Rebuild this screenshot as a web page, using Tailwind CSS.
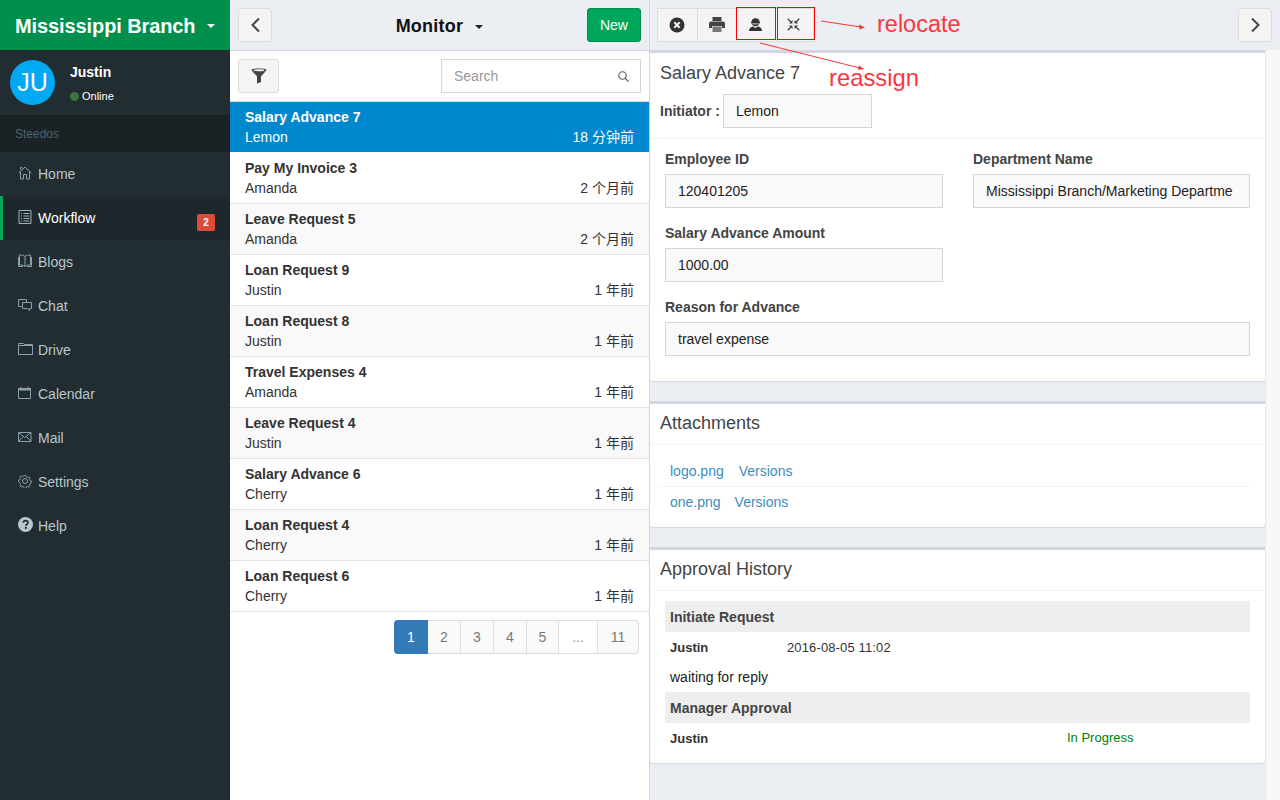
<!DOCTYPE html>
<html>
<head>
<meta charset="utf-8">
<script src="https://cdn.jsdelivr.net/npm/@tailwindcss/browser@4"></script>
</head>
<body class="m-0 overflow-hidden">
<div class="relative flex w-[1280px] h-[800px] overflow-hidden bg-white text-[14px] text-[#333] font-['Liberation_Sans','Noto_Sans_CJK_SC',sans-serif]">

  <!-- Sidebar -->
  <aside class="w-[230px] h-full shrink-0 bg-[#222d32] flex flex-col">
    <div class="h-[50px] bg-[#008f4c] text-white flex items-center pl-[15px] pt-[2px]">
      <span class="text-[20px] font-bold leading-none tracking-[-0.1px] w-[192px]">Mississippi Branch</span>
      <span class="w-0 h-0 border-x-[4px] border-x-transparent border-t-[4px] border-t-white"></span>
    </div>
    <div class="h-[65px] flex">
      <div class="ml-[10px] mt-[10px] w-[45px] h-[45px] rounded-full bg-[#00a9f4] text-white flex items-center justify-center text-[25px] leading-none">JU</div>
      <div class="ml-[15px] flex flex-col">
        <span class="mt-[14px] text-[14px] leading-[17px] font-bold text-white">Justin</span>
        <span class="mt-[8px] flex items-center text-[11px] leading-[14px] text-white"><span class="w-[9px] h-[9px] rounded-full bg-[#3c763d] mr-[3px]"></span>Online</span>
      </div>
    </div>
    <div class="h-[37px] bg-[#1a2226] pl-[15px] flex items-center text-[12px] text-[#4b646f]">Steedos</div>
    <nav class="flex flex-col text-[#b8c7ce]">
      <a class="h-[44px] flex items-center pl-[18px]"><svg class="w-[14px] h-[14px] mr-[6px] -mt-[3px]" viewBox="0 0 14 14" fill="none" stroke="#8aa0aa" stroke-width="1"><path d="M.7 7 7 1l6.300 6M2.500 5.700V13H5.500V8.500h3V13h3V5.700M2.500 3.500v-2h1.500V2.500"/></svg>Home</a>
      <a class="h-[44px] flex items-center pl-[15px] border-l-[3px] border-[#00a65a] bg-[#1e282c] text-white relative"><svg class="w-[14px] h-[14px] mr-[6px] -mt-[3px]" viewBox="0 0 14 14" fill="none" stroke="#9fb0b8" stroke-width="1"><path d="M1 .5h12v13H1zM3 3.500h1M5.500 3.500h6M3 6h1M5.500 6h6M3 8.500h1M5.500 8.500h6M3 11h1M5.500 11h6"/></svg>Workflow<span class="absolute left-[194px] top-[18px] w-[18px] h-[17px] rounded-[2px] bg-[#dd4b39] text-white text-[10px] font-bold flex items-center justify-center">2</span></a>
      <a class="h-[44px] flex items-center pl-[18px]"><svg class="w-[14px] h-[14px] mr-[6px] -mt-[3px]" viewBox="0 0 14 14" fill="none" stroke="#8aa0aa" stroke-width="1"><path d="M7 2.500C5.500 1 3.500 1 1.500 1v10c2 0 4 0 5.500 1.500C8.500 11 10.500 11 12.500 11V1C10.500 1 8.500 1 7 2.500zM7 2.500v10M.5 3v9.500H5M13.500 3v9.500H9"/></svg>Blogs</a>
      <a class="h-[44px] flex items-center pl-[18px]"><svg class="w-[14px] h-[14px] mr-[6px] -mt-[3px]" viewBox="0 0 14 14" fill="none" stroke="#8aa0aa" stroke-width="1"><path d="M3.500 8.500H.5v-7h8v3M4.500 4.500h9v6h-2v2l-2-2h-5z"/></svg>Chat</a>
      <a class="h-[44px] flex items-center pl-[18px]"><svg class="w-[15px] h-[14px] mr-[5px] -mt-[3px]" viewBox="0 0 15 14" fill="none" stroke="#8aa0aa" stroke-width="1"><path d="M.5 2.500v10h14v-9h-14M.5 2.500V1.500h5l1 1h8v1"/></svg>Drive</a>
      <a class="h-[44px] flex items-center pl-[18px]"><svg class="w-[14px] h-[14px] mr-[6px] -mt-[3px]" viewBox="0 0 14 14" fill="none" stroke="#8aa0aa" stroke-width="1"><path d="M.5 2.500h12v10H.5z"/><path d="M.5 2.500h12v1.500H.5z" fill="#8aa0aa"/><path d="M3 .8v2M10 .8v2"/></svg>Calendar</a>
      <a class="h-[44px] flex items-center pl-[18px]"><svg class="w-[14px] h-[14px] mr-[6px] -mt-[3px]" viewBox="0 0 14 14" fill="none" stroke="#8aa0aa" stroke-width="1"><path d="M.5 2.500h12.500v9H.5zM.5 2.500l6.250 5 6.250-5M.5 11.500l4.500-5M13 11.500l-4.500-5"/></svg>Mail</a>
      <a class="h-[44px] flex items-center pl-[18px]"><svg class="w-[14px] h-[14px] mr-[6px] -mt-[3px]" viewBox="0 0 14 14" fill="none" stroke="#8aa0aa" stroke-width="1"><circle cx="7" cy="7" r="2.500"/><path d="M6 .8h2l.4 1.700 1.500.6 1.500-.9 1.400 1.400-.9 1.500.6 1.500 1.700.4v2l-1.700.4-.6 1.500.9 1.500-1.400 1.400-1.500-.9-1.500.6-.4 1.700H6l-.4-1.700-1.500-.6-1.500.9-1.400-1.400.9-1.500-.6-1.500L-.2 8V6l1.700-.4.6-1.500-.9-1.500L2.600 1.200l1.500.9 1.500-.6z" transform="translate(.7 .7) scale(.9)"/></svg>Settings</a>
      <a class="h-[44px] flex items-center pl-[18px]"><svg class="w-[15px] h-[15px] mr-[5px] -mt-[3px]" viewBox="0 0 15 15"><circle cx="7.500" cy="7.500" r="7.500" fill="#b8c7ce"/><path d="M5.200 5.600C5.400 4.300 6.300 3.600 7.600 3.600c1.400 0 2.300.8 2.300 2 0 1.700-2 1.700-2 3.300" fill="none" stroke="#222d32" stroke-width="1.700"/><rect x="6.900" y="10" width="2" height="1.800" fill="#222d32"/></svg>Help</a>
    </nav>
  </aside>

  <!-- List column -->
  <section class="w-[420px] h-full shrink-0 border-r border-[#d2d6de] flex flex-col">
    <header class="h-[51px] shrink-0 bg-[#ebeef3] border-b border-[#d2d6de] flex items-center justify-between px-[8px] relative">
      <button class="w-[34px] h-[34px] rounded-[4px] border border-[#ddd] bg-[#f4f4f4] flex items-center justify-center"><svg class="w-[11px] h-[16px]" viewBox="0 0 11 16" fill="none" stroke="#444" stroke-width="2"><path d="M9 1.500 2.500 8 9 14.500"/></svg></button>
      <div class="ml-[20px] mt-[2px] flex items-center text-[18px] tracking-[0.25px] font-bold text-[#111]"><span>Monitor</span><span class="ml-[12px] mt-[2px] w-0 h-0 border-x-[4px] border-x-transparent border-t-[4px] border-t-[#222]"></span></div>
      <button class="w-[54px] h-[34px] rounded-[3px] border border-[#008d4c] bg-[#00a65a] text-white text-[14px]">New</button>
    </header>
    <div class="h-[50px] shrink-0 flex items-center justify-between px-[8px]">
      <button class="w-[41px] h-[34px] rounded-[3px] border border-[#ddd] bg-[#f4f4f4] flex items-center justify-center"><svg class="w-[16px] h-[16px]" viewBox="0 0 16 16" fill="#444"><path d="M.5 1.500C2 .3 14 .3 15.500 1.500 15.500 3 10.500 7.500 10 8.500V14l-4 1.500V8.500C5.500 7.500.5 3 .5 1.500z"/><ellipse cx="8" cy="2.300" rx="5.500" ry="1" fill="#f4f4f4"/></svg></button>
      <div class="w-[200px] h-[34px] border border-[#d2d6de] flex items-center justify-between pl-[12px] pr-[11px] text-[#999]"><span>Search</span><svg class="w-[11px] h-[11px]" viewBox="0 0 11 11" fill="none" stroke="#555" stroke-width="1.100"><circle cx="4.500" cy="4.500" r="3.700"/><path d="m7.300 7.300 3.200 3.200"/></svg></div>
    </div>
    <div class="flex flex-col border-t border-[#ddd]">
      <div class="h-[50px] bg-[#0088cf] text-white px-[15px] pt-[5px] leading-[20px]"><div class="font-bold">Salary Advance 7</div><div class="flex justify-between"><span>Lemon</span><span>18 分钟前</span></div></div>
      <div class="h-[52px] bg-white border-b border-[#e3e3e3] px-[15px] pt-[6px] leading-[20px]"><div class="font-bold">Pay My Invoice 3</div><div class="flex justify-between"><span>Amanda</span><span>2 个月前</span></div></div>
      <div class="h-[51px] bg-[#f9f9f9] border-b border-[#e3e3e3] px-[15px] pt-[5px] leading-[20px]"><div class="font-bold">Leave Request 5</div><div class="flex justify-between"><span>Amanda</span><span>2 个月前</span></div></div>
      <div class="h-[51px] bg-white border-b border-[#e3e3e3] px-[15px] pt-[5px] leading-[20px]"><div class="font-bold">Loan Request 9</div><div class="flex justify-between"><span>Justin</span><span>1 年前</span></div></div>
      <div class="h-[51px] bg-[#f9f9f9] border-b border-[#e3e3e3] px-[15px] pt-[5px] leading-[20px]"><div class="font-bold">Loan Request 8</div><div class="flex justify-between"><span>Justin</span><span>1 年前</span></div></div>
      <div class="h-[51px] bg-white border-b border-[#e3e3e3] px-[15px] pt-[5px] leading-[20px]"><div class="font-bold">Travel Expenses 4</div><div class="flex justify-between"><span>Amanda</span><span>1 年前</span></div></div>
      <div class="h-[51px] bg-[#f9f9f9] border-b border-[#e3e3e3] px-[15px] pt-[5px] leading-[20px]"><div class="font-bold">Leave Request 4</div><div class="flex justify-between"><span>Justin</span><span>1 年前</span></div></div>
      <div class="h-[51px] bg-white border-b border-[#e3e3e3] px-[15px] pt-[5px] leading-[20px]"><div class="font-bold">Salary Advance 6</div><div class="flex justify-between"><span>Cherry</span><span>1 年前</span></div></div>
      <div class="h-[51px] bg-[#f9f9f9] border-b border-[#e3e3e3] px-[15px] pt-[5px] leading-[20px]"><div class="font-bold">Loan Request 4</div><div class="flex justify-between"><span>Cherry</span><span>1 年前</span></div></div>
      <div class="h-[51px] bg-white border-b border-[#e3e3e3] px-[15px] pt-[5px] leading-[20px]"><div class="font-bold">Loan Request 6</div><div class="flex justify-between"><span>Cherry</span><span>1 年前</span></div></div>
    </div>
    <div class="mt-[8px] mr-[10px] self-end flex h-[34px] text-[#777]">
      <span class="w-[34px] rounded-l-[4px] bg-[#337ab7] text-white flex items-center justify-center">1</span>
      <span class="w-[33px] bg-[#fafafa] border-y border-r border-[#ddd] flex items-center justify-center">2</span>
      <span class="w-[33px] bg-[#fafafa] border-y border-r border-[#ddd] flex items-center justify-center">3</span>
      <span class="w-[33px] bg-[#fafafa] border-y border-r border-[#ddd] flex items-center justify-center">4</span>
      <span class="w-[32px] bg-[#fafafa] border-y border-r border-[#ddd] flex items-center justify-center">5</span>
      <span class="w-[39px] bg-white border-y border-r border-[#ddd] flex items-center justify-center text-[#999]">...</span>
      <span class="w-[41px] rounded-r-[4px] bg-[#fafafa] border-y border-r border-[#ddd] flex items-center justify-center">11</span>
    </div>
  </section>

  <!-- Detail column -->
  <main class="flex-1 h-full flex flex-col bg-[#ebeef3] min-w-0">
    <header class="h-[50px] shrink-0 flex items-center justify-between pl-[7px] pr-[8px]">
      <div class="flex h-[34px]">
        <button class="w-[41px] bg-[#f4f4f4] border border-[#ddd] flex items-center justify-center"><svg class="w-[16px] h-[16px] mr-[1px] -mt-[1px]" viewBox="0 0 16 16"><circle cx="8" cy="8" r="7.500" fill="#333"/><path d="m5.300 5.300 5.400 5.400m0-5.400-5.400 5.400" stroke="#f4f4f4" stroke-width="2"/></svg></button>
        <button class="w-[39px] bg-[#f4f4f4] border-y border-r border-[#ddd] flex items-center justify-center"><svg class="w-[16px] h-[15px] -mt-[1px]" viewBox="0 0 16 15"><path d="M3.500 0h9v4h-9z" fill="#444"/><path d="M2 4.500h12a2 2 0 0 1 2 2V11h-3V9H3v2H0V6.500a2 2 0 0 1 2-2z" fill="#444"/><path d="M3.500 9.500h9V15h-9z" fill="#777"/></svg></button>
        <button class="w-[41px] bg-[#f4f4f4] border-y border-r border-[#ddd] flex items-center justify-center"><svg class="w-[13px] h-[13px] mr-[3px] -mt-[1px]" viewBox="0 0 13 13" fill="#333"><circle cx="6.500" cy="4.200" r="4"/><path d="M2 3.800h9v1.300H2z" fill="#333"/><path d="M3.200 5.500h6.600v.8H3.200z" fill="#f4f4f4"/><path d="M0 13c0-2.800 2-4.300 4-4.500l2.500 1.500L9 8.500c2 .2 4 1.700 4 4.500z"/></svg></button>
        <button class="w-[36px] bg-[#f4f4f4] border-y border-r border-[#ddd] flex items-center justify-center"><svg class="w-[13px] h-[13px] mr-[5px] -mt-[1px]" viewBox="0 0 13 13" fill="none" stroke="#444" stroke-width="1.300"><path d="m.7.7 3.800 3.800M12.300.7 8.500 4.500M.7 12.300l3.800-3.800M12.300 12.300 8.500 8.500"/><path d="M2 5.500h3.500V2zM11 5.500H7.500V2zM2 7.500h3.500V11zM11 7.500H7.500V11z" fill="#444" stroke="none"/></svg></button>
      </div>
      <button class="w-[34px] h-[34px] rounded-[4px] border border-[#ddd] bg-[#f4f4f4] flex items-center justify-center"><svg class="w-[11px] h-[16px]" viewBox="0 0 11 16" fill="none" stroke="#444" stroke-width="2"><path d="M2 1.500 8.500 8 2 14.500"/></svg></button>
    </header>

    <div class="flex-1 flex min-h-0">
      <div class="w-[615px] shrink-0 flex flex-col gap-[20px]">
        <!-- Form card -->
        <div class="h-[331px] bg-white border-t-[3px] border-[#d2d6de] rounded-b-[3px] shadow-[0_1px_1px_rgba(0,0,0,0.1)]">
          <div class="h-[86px] border-b border-[#f4f4f4] pl-[10px]">
            <div class="h-[41px] pt-[10px] text-[18px] leading-[20px] text-[#444]">Salary Advance 7</div>
            <div class="flex items-center h-[34px]"><span class="font-bold text-[#444] mr-[3px] w-[60px] whitespace-nowrap">Initiator :</span><span class="w-[149px] h-[34px] bg-[#f9f9f9] border border-[#d2d6de] pl-[12px] flex items-center text-[#222]">Lemon</span></div>
          </div>
          <div class="pl-[15px] pr-[15px] pt-[10px] grid grid-cols-[278px_277px] gap-x-[30px]">
            <div class="h-[74px]"><div class="h-[25px] font-bold text-[#444] leading-[20px]">Employee ID</div><div class="h-[34px] bg-[#f9f9f9] border border-[#d2d6de] pl-[12px] flex items-center text-[#222]">120401205</div></div>
            <div class="h-[74px]"><div class="h-[25px] font-bold text-[#444] leading-[20px]">Department Name</div><div class="h-[34px] bg-[#f9f9f9] border border-[#d2d6de] pl-[12px] flex items-center text-[#222] whitespace-nowrap">Mississippi Branch/Marketing Departme</div></div>
            <div class="h-[74px]"><div class="h-[25px] font-bold text-[#444] leading-[20px]">Salary Advance Amount</div><div class="h-[34px] bg-[#f9f9f9] border border-[#d2d6de] pl-[12px] flex items-center text-[#222]">1000.00</div></div>
            <div class="h-[74px]"></div>
            <div class="col-span-2"><div class="h-[25px] font-bold text-[#444] leading-[20px]">Reason for Advance</div><div class="h-[34px] bg-[#f9f9f9] border border-[#d2d6de] pl-[12px] flex items-center text-[#222]">travel expense</div></div>
          </div>
        </div>
        <!-- Attachments -->
        <div class="h-[126px] bg-white border-t-[3px] border-[#d2d6de] rounded-b-[3px] shadow-[0_1px_1px_rgba(0,0,0,0.1)]">
          <div class="h-[41px] border-b border-[#f4f4f4] pl-[10px] pt-[9px] text-[18px] leading-[20px] text-[#444]">Attachments</div>
          <div class="ml-[10px] mr-[15px] px-[10px] h-[42px] border-b border-[#f4f4f4] flex items-center pt-[12px] text-[#3c8dbc]"><span>logo.png</span><span class="ml-[15px]">Versions</span></div>
          <div class="ml-[10px] mr-[15px] px-[10px] h-[31px] flex items-center text-[#3c8dbc]"><span>one.png</span><span class="ml-[14px]">Versions</span></div>
        </div>
        <!-- History -->
        <div class="h-[216px] bg-white border-t-[3px] border-[#d2d6de] rounded-b-[3px] shadow-[0_1px_1px_rgba(0,0,0,0.1)]">
          <div class="h-[41px] border-b border-[#f4f4f4] pl-[10px] pt-[9px] text-[18px] leading-[20px] text-[#444]">Approval History</div>
          <div class="mx-[15px] mt-[10px]">
            <div class="h-[31px] bg-[#eee] pl-[5px] pt-[2px] flex items-center font-bold text-[#444]">Initiate Request</div>
            <div class="h-[30px] pl-[5px] pt-[2px] flex items-center text-[13px]"><span class="w-[117px] font-bold text-[#333]">Justin</span><span class="text-[#333] tracking-[0.13px]">2016-08-05 11:02</span></div>
            <div class="h-[30px] pl-[5px] flex items-center text-[#222]">waiting for reply</div>
            <div class="h-[31px] bg-[#eee] pl-[5px] pt-[2px] flex items-center font-bold text-[#444]">Manager Approval</div>
            <div class="h-[30px] pl-[5px] pt-[2px] flex items-center text-[13px]"><span class="w-[397px] font-bold text-[#333]">Justin</span><span class="text-[#008000] -mt-[2px]">In Progress</span></div>
          </div>
        </div>
      </div>
      <div class="flex-1 bg-[#f8f8f8] border-l border-[#e8e8e8]"></div>
    </div>
  </main>

  <!-- Annotations over the screenshot -->
  <div class="absolute left-[736px] top-[7px] w-[40px] h-[33px] border border-[#f00]"></div>
  <div class="absolute left-[777px] top-[7px] w-[38px] h-[33px] border border-[#f00]"></div>
  <svg class="absolute left-[750px] top-[15px] w-[130px] h-[55px]" viewBox="0 0 130 55" fill="none"><path d="M71 6 111 12" stroke="#f33" stroke-width="1"/><path d="m115 12.500-6-3 .5 5z" fill="#f33"/><path d="M10 28 110 53" stroke="#f33" stroke-width="1"/><path d="m114 54-5-3.500-1 4.500z" fill="#f33"/></svg>
  <span class="absolute left-[877px] top-[10px] text-[23.5px] leading-[28px] text-[#fb3640]">relocate</span>
  <span class="absolute left-[829px] top-[64px] text-[23.8px] leading-[28px] text-[#fb3640]">reassign</span>
</div>
</body>
</html>
